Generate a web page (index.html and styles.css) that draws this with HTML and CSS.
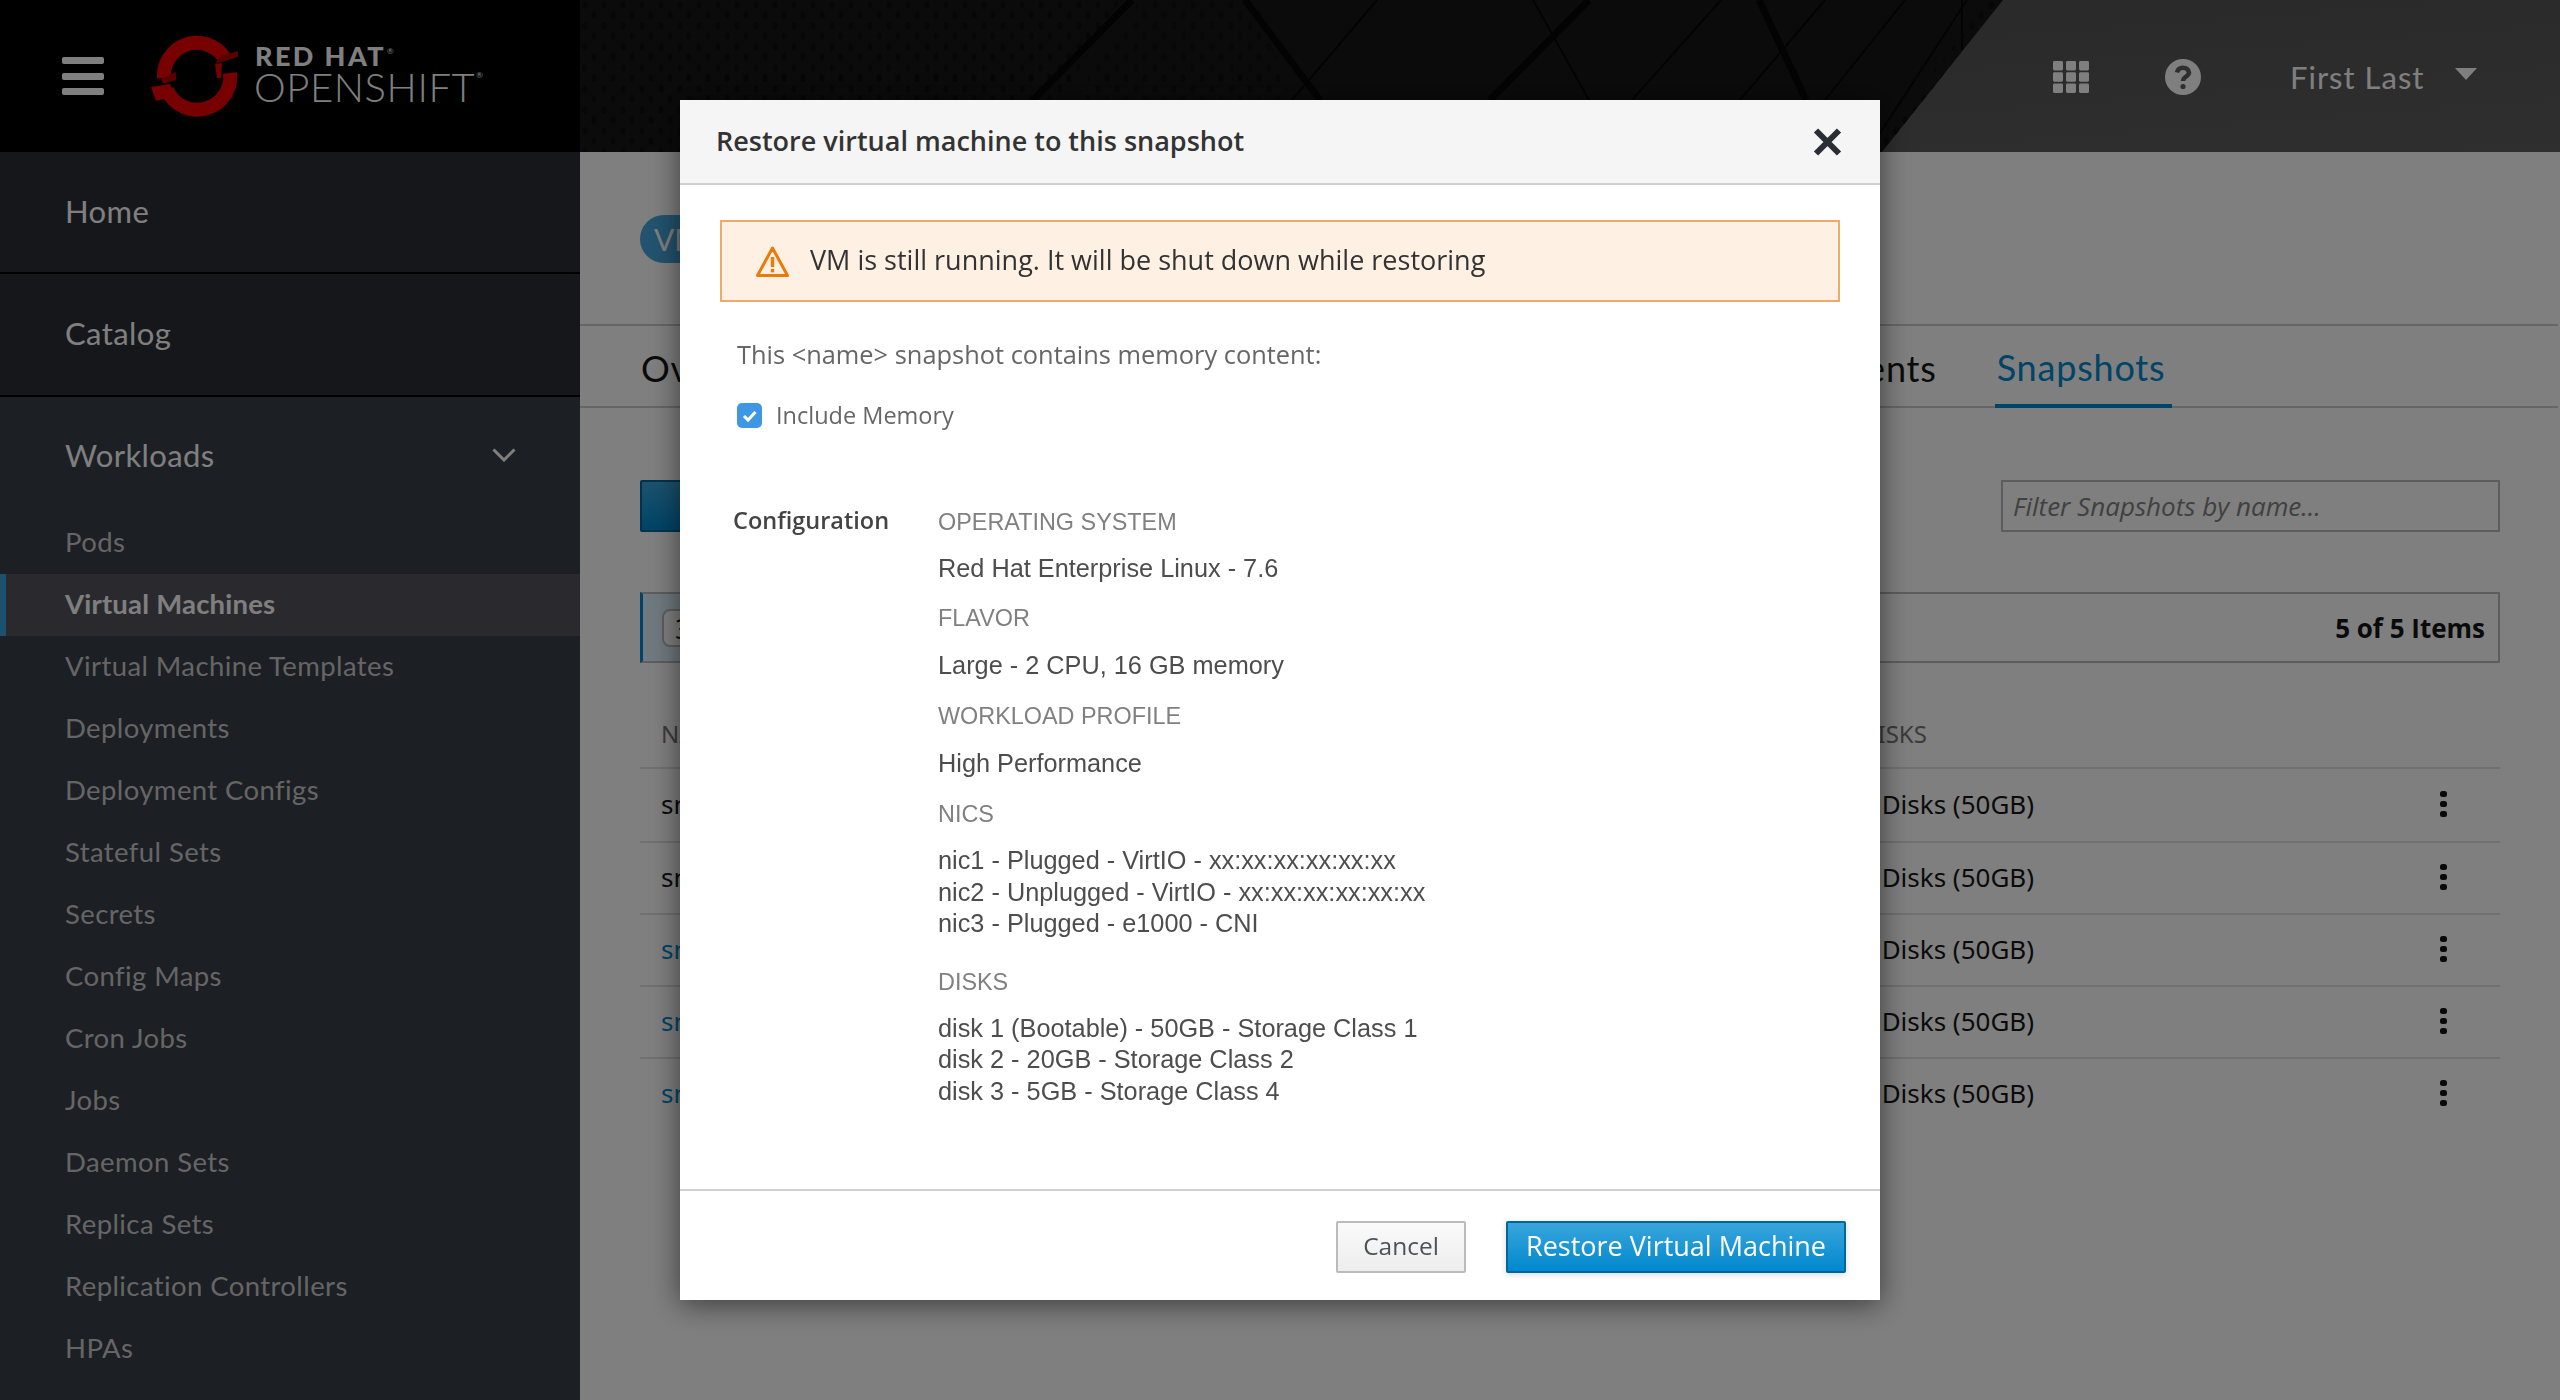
FILE: index.html
```html
<!DOCTYPE html>
<html lang="en">
<head>
<meta charset="utf-8">
<title>Restore virtual machine to this snapshot</title>
<link rel="stylesheet" href="styles.css">
</head>
<body>
<div class="page">
  <header class="masthead">
    <div class="brand">
      <div class="burger"><span></span><span></span><span></span></div>
      <svg class="logo-mark" viewBox="-48 -42 96 84" aria-hidden="true">
        <path class="ring" d="M-33 2A33 33 0 0 1 27 -19"/>
        <path class="ring" d="M33 -3A33 33 0 0 1 -30 14"/>
        <polygon class="stripe" points="24,-20 41,-25 41,-19 18,-12"/>
        <polygon class="stripe" points="-36,3 -21,-4 -21,4 -34,8"/>
        <polygon class="tab" points="-46,11 -27,8 -22,20 -41,25"/>
        <polygon class="tab" points="18,-12 25,-13 24,2 20,2"/>
      </svg>
      <div class="wordmark">
        <div class="wm-top">RED HAT<sup>®</sup></div>
        <div class="wm-bottom">OPENSHIFT<sup>®</sup></div>
      </div>
    </div>
    <div class="mast-main">
      <svg class="mast-art" viewBox="0 0 1980 152" preserveAspectRatio="none" aria-hidden="true">
        <defs>
          <pattern id="dots" width="19" height="21" patternUnits="userSpaceOnUse">
            <ellipse cx="5" cy="5" rx="2.6" ry="4" fill="#0e0e0e"/>
            <ellipse cx="14" cy="15" rx="2.6" ry="4" fill="#0e0e0e"/>
          </pattern>
          <linearGradient id="mastlight" x1="0" y1="0" x2="1" y2="1">
            <stop offset="0" stop-color="#4e4e4e"/>
            <stop offset="1" stop-color="#5e5e5e"/>
          </linearGradient>
        </defs>
        <rect width="1980" height="152" fill="url(#mastlight)"/>
        <polygon points="0,0 1423,0 1302,152 0,152" fill="#171717"/>
        <polygon points="0,0 540,0 450,152 0,152" fill="url(#dots)"/>
        <polygon points="560,0 680,0 710,100 480,152 460,152" fill="url(#dots)" opacity=".8"/>
        <polygon points="1410,0 1423,0 1302,152 1290,152" fill="url(#dots)"/>
        <g class="bands">
          <line x1="552" y1="0" x2="453" y2="100" class="thick"/>
          <line x1="665" y1="0" x2="740" y2="100" class="thick"/>
          <line x1="797" y1="0" x2="712" y2="100"/>
          <line x1="953" y1="0" x2="1009" y2="100"/>
          <line x1="1009" y1="0" x2="910" y2="100" class="thick"/>
          <line x1="1141" y1="0" x2="1052" y2="100"/>
          <line x1="1179" y1="0" x2="1226" y2="100" class="thick"/>
          <line x1="1245" y1="0" x2="1160" y2="100"/>
          <line x1="1325" y1="0" x2="1245" y2="100"/>
          <line x1="1387" y1="0" x2="1300" y2="133"/>
          <line x1="1382" y1="0" x2="1382" y2="50"/>
        </g>
      </svg>
      <div class="mast-tools">
        <svg class="tool-grid" viewBox="0 0 36 32" aria-hidden="true">
          <rect x="0" y="0" width="10" height="9.5" rx="1.4"/><rect x="13" y="0" width="10" height="9.5" rx="1.4"/><rect x="26" y="0" width="10" height="9.5" rx="1.4"/>
          <rect x="0" y="11.2" width="10" height="9.5" rx="1.4"/><rect x="13" y="11.2" width="10" height="9.5" rx="1.4"/><rect x="26" y="11.2" width="10" height="9.5" rx="1.4"/>
          <rect x="0" y="22.5" width="10" height="9.5" rx="1.4"/><rect x="13" y="22.5" width="10" height="9.5" rx="1.4"/><rect x="26" y="22.5" width="10" height="9.5" rx="1.4"/>
        </svg>
        <svg class="tool-help" viewBox="0 0 36 36" aria-hidden="true">
          <circle cx="18" cy="18" r="18" class="help-disc"/>
          <path class="help-mark" d="M12 13.5a6.2 6.2 0 0 1 12 0c0 4-6 4-6 8.5"/>
          <circle cx="18" cy="27.5" r="2.6" class="help-dot"/>
        </svg>
        <span class="user">First Last</span>
        <svg class="user-caret" viewBox="0 0 22 12" aria-hidden="true"><path d="M0 0H22L11 12Z"/></svg>
      </div>
    </div>
  </header>

  <div class="shell">
    <nav class="sidebar">
      <div class="nav-top">Home</div>
      <div class="nav-top">Catalog</div>
      <div class="nav-group">
        <div class="nav-head">
          <span>Workloads</span>
          <svg class="chev" viewBox="0 0 24 14" aria-hidden="true"><path d="M1.5 1.5 12 12 22.500 1.500"/></svg>
        </div>
        <a class="nav-sub">Pods</a>
        <a class="nav-sub is-active">Virtual Machines</a>
        <a class="nav-sub">Virtual Machine Templates</a>
        <a class="nav-sub">Deployments</a>
        <a class="nav-sub">Deployment Configs</a>
        <a class="nav-sub">Stateful Sets</a>
        <a class="nav-sub">Secrets</a>
        <a class="nav-sub">Config Maps</a>
        <a class="nav-sub">Cron Jobs</a>
        <a class="nav-sub">Jobs</a>
        <a class="nav-sub">Daemon Sets</a>
        <a class="nav-sub">Replica Sets</a>
        <a class="nav-sub">Replication Controllers</a>
        <a class="nav-sub">HPAs</a>
      </div>
    </nav>

    <main class="content">
      <div class="crumb"><span class="vm-pill">VM</span></div>
      <div class="tabs">
        <span class="tab-item">Overview</span>
        <span class="tab-item tab-events">Events</span>
        <span class="tab-item tab-current">Snapshots</span>
      </div>
      <div class="actions">
        <button class="take-btn">New</button>
        <div class="filter">Filter Snapshots by name...</div>
      </div>
      <div class="selection">
        <span class="sel-count">3</span>
        <strong class="sel-total">5 of 5 Items</strong>
      </div>
      <div class="table">
        <div class="t-row t-head"><span>NAME</span><span>DISKS</span><i></i></div>
        <div class="t-row t-a"><span>snapshot-1</span><span>3 Disks (50GB)</span><i class="kebab"><b></b><b></b><b></b></i></div>
        <div class="t-row t-b"><span>snapshot-2</span><span>3 Disks (50GB)</span><i class="kebab"><b></b><b></b><b></b></i></div>
        <div class="t-row t-b"><span class="t-link">snapshot-3</span><span>3 Disks (50GB)</span><i class="kebab"><b></b><b></b><b></b></i></div>
        <div class="t-row t-b"><span class="t-link">snapshot-4</span><span>3 Disks (50GB)</span><i class="kebab"><b></b><b></b><b></b></i></div>
        <div class="t-row t-b"><span class="t-link">snapshot-5</span><span>3 Disks (50GB)</span><i class="kebab"><b></b><b></b><b></b></i></div>
      </div>
    </main>
  </div>
</div>

<div class="backdrop">
  <section class="modal">
    <header class="modal-head">
      <h1 class="modal-title">Restore virtual machine to this snapshot</h1>
      <svg class="modal-close" viewBox="0 0 29 28" aria-hidden="true"><path d="M3 2.500 26 25.500M26 2.500 3 25.500"/></svg>
    </header>
    <div class="modal-body">
      <div class="alert">
        <svg class="alert-icon" viewBox="0 0 33 31" aria-hidden="true">
          <path class="alert-tri" d="M16.500 2 31.500 29.500H1.500Z"/>
          <rect class="alert-ex" x="14.800" y="11" width="3.400" height="10"/>
          <rect class="alert-ex" x="14.800" y="23" width="3.400" height="3.400"/>
        </svg>
        <span class="alert-text">VM is still running. It will be shut down while restoring</span>
      </div>
      <p class="memory-note">This &lt;name&gt; snapshot contains memory content:</p>
      <label class="memory-check">
        <svg class="check-box" viewBox="0 0 25 25" aria-hidden="true">
          <rect width="25" height="25" rx="5"/>
          <path d="M7 13 11 17 18.500 9"/>
        </svg>
        <span>Include Memory</span>
      </label>
      <div class="config">
        <div class="config-title">Configuration</div>
        <div class="config-list">
          <div class="c-label c-label-first">OPERATING SYSTEM</div>
          <div class="c-value c-value-first">Red Hat Enterprise Linux - 7.6</div>
          <div class="c-label">FLAVOR</div>
          <div class="c-value">Large - 2 CPU, 16 GB memory</div>
          <div class="c-label">WORKLOAD PROFILE</div>
          <div class="c-value">High Performance</div>
          <div class="c-label">NICS</div>
          <div class="c-value c-multi">
            <div>nic1 - Plugged - VirtIO - xx:xx:xx:xx:xx:xx</div>
            <div>nic2 - Unplugged - VirtIO - xx:xx:xx:xx:xx:xx</div>
            <div>nic3 - Plugged - e1000 - CNI</div>
          </div>
          <div class="c-label">DISKS</div>
          <div class="c-value c-multi">
            <div>disk 1 (Bootable) - 50GB - Storage Class 1</div>
            <div>disk 2 - 20GB - Storage Class 2</div>
            <div>disk 3 - 5GB - Storage Class 4</div>
          </div>
        </div>
      </div>
    </div>
    <footer class="modal-foot">
      <button class="btn btn-default">Cancel</button>
      <button class="btn btn-primary">Restore Virtual Machine</button>
    </footer>
  </section>
</div>
</body>
</html>
```
FILE: styles.css
```css
* { box-sizing: border-box; }
html, body { margin: 0; height: 100%; overflow: hidden; }
body { background: #fff; font-family: "Open Sans", "Liberation Sans", sans-serif; color: #151515; }

.page { height: 1400px; display: flex; flex-direction: column; }

/* masthead */
.masthead { height: 152px; display: flex; flex: none; background: #000; }
.brand { width: 580px; flex: none; display: flex; align-items: center; padding-left: 62px; }
.burger { width: 42px; display: flex; flex-direction: column; gap: 8.500px; margin-right: 45px; }
.burger span { display: block; height: 7px; background: #fff; border-radius: 2px; }
.logo-mark { width: 96px; height: 84px; flex: none; }
.ring { fill: none; stroke: #e00; stroke-width: 14; }
.stripe { fill: #b20000; }
.tab { fill: #e00; }
.wordmark { margin-left: 9px; color: #fff; font-family: "Lato", "Open Sans", sans-serif; margin-top: -2px; }
.wm-top { font-weight: 900; font-size: 27px; line-height: 24px; letter-spacing: 2.400px; margin-left: 1px; }
.wm-bottom { font-weight: 300; font-size: 40px; line-height: 38px; letter-spacing: .6px; }
.wordmark sup { font-size: 8px; font-weight: 400; vertical-align: top; line-height: 14px; letter-spacing: 0; margin-left: 1px; }

.mast-main { flex: 1; display: grid; min-width: 0; }
.mast-art, .mast-tools { grid-area: 1 / 1; }
.mast-art { width: 100%; height: 152px; display: block; }
.bands line { stroke: #070707; stroke-width: 2; }
.bands line.thick { stroke-width: 7; }
.mast-tools { display: flex; align-items: center; justify-content: flex-end; padding-right: 83px; color: #fff; }
.tool-grid { width: 36px; height: 32px; fill: #fff; margin-right: 76px; margin-top: 2px; }
.tool-help { width: 36px; height: 36px; margin-right: 89px; margin-top: 2px; }
.help-disc { fill: #fff; }
.help-mark { fill: none; stroke: #5f5f5f; stroke-width: 4.500; }
.help-dot { fill: #5f5f5f; }
.user { font-family: "Lato", sans-serif; font-size: 31px; letter-spacing: 1px; margin-right: 33px; margin-top: 2px; width: 132px; white-space: nowrap; }
.user-caret { width: 22px; height: 12px; fill: #fff; margin-top: -4px; }

/* shell */
.shell { flex: 1; display: flex; min-height: 0; }
.sidebar { width: 580px; flex: none; background: #383e46; font-family: "Lato", sans-serif; color: #fff; overflow: hidden; }
.nav-top { height: 122px; background: #2c2e36; border-bottom: 2px solid #000; display: flex; align-items: center; padding: 0 0 3px 65px; font-size: 31px; letter-spacing: .4px; color: #fff; }
.nav-top + .nav-top { height: 123px; }
.nav-head { height: 115px; display: flex; align-items: center; justify-content: space-between; padding: 0 64px 0 65px; font-size: 31px; letter-spacing: .4px; }
.chev { width: 24px; height: 14px; fill: none; stroke: #fff; stroke-width: 3; }
.nav-sub { display: flex; align-items: center; height: 62px; padding: 0 0 3px 65px; font-size: 27.500px; letter-spacing: .4px; color: #cbcbcb; }
.nav-sub.is-active { background: #54545c; color: #fff; font-weight: 700; letter-spacing: .2px; border-left: 6px solid #39a5dc; padding-left: 59px; }

/* content */
.content { flex: 1; min-width: 0; display: flex; flex-direction: column; background: #fff; }
.crumb { height: 174px; padding: 63px 0 0 60px; border-bottom: 2px solid #ccc; margin-right: 2px; flex: none; }
.vm-pill { display: flex; align-items: center; width: 100px; height: 48px; padding-left: 14px; border-radius: 24px; background: #46a6dc; color: #fff; font-size: 30px; font-family: "Lato", sans-serif; }
.tabs { height: 82px; flex: none; display: flex; align-items: center; border-bottom: 2px solid #ccc; margin-right: 2px; padding: 4px 0 0 61px; font-family: "Lato", sans-serif; font-size: 36px; letter-spacing: .8px; color: #151515; }
.tab-item { white-space: nowrap; }
.tab-events { margin-left: 912px; width: 224px; text-align: right; }
.tab-current { margin: -4px 0 -2px 58px; padding: 4px 7px 0 2px; color: #0088ce; align-self: stretch; display: flex; align-items: center; border-bottom: 4px solid #0088ce; }
.actions { flex: none; display: flex; justify-content: space-between; align-items: flex-start; padding: 72px 60px 0 60px; height: 184px; }
.take-btn { width: 280px; height: 52px; border: 2px solid #00659c; border-radius: 2px; background: linear-gradient(#39a5dc, #0088ce); color: #fff; font: 26px "Open Sans", sans-serif; padding: 0 0 0 36px; text-align: left; white-space: nowrap; }
.filter { width: 499px; height: 52px; border: 2px solid #bbb; background: #fff; padding-left: 10px; display: flex; align-items: center; font-style: italic; font-size: 26px; color: #828282; }
.selection { flex: none; height: 71px; margin: 0 60px; border: 2px solid #bbb; border-left: 3px solid #0088ce; background: linear-gradient(90deg, #def3ff, #fff 50%); display: flex; align-items: center; justify-content: space-between; padding: 0 13px 0 19px; }
.sel-count { width: 120px; height: 38px; border: 2px solid #bbb; border-radius: 8px; background: #fff; font-size: 28px; display: flex; align-items: center; padding-left: 11px; color: #151515; }
.sel-total { font-size: 26px; font-weight: 700; color: #151515; }
.table { margin: 0 60px; font-family: "Noto Sans", sans-serif; font-size: 26px; }
.t-row { display: grid; grid-template-columns: 1199px 1fr 60px; align-items: center; height: 72px; border-top: 2px solid #e0e0e0; padding-left: 21px; padding-bottom: 2px; }
.t-a { height: 74px; }
.t-head { height: 106px; border-top: 0; border-bottom: 2px solid #e0e0e0; margin-bottom: -2px; color: #777; font-size: 24px; padding-top: 38px; }
.t-link { color: #0088ce; }
.kebab { display: flex; flex-direction: column; gap: 3.500px; width: 7px; }
.kebab b { display: block; width: 7px; height: 6.500px; border-radius: 2.500px; background: #151515; }

/* modal */
.backdrop { position: fixed; inset: 0; background: rgba(0, 0, 0, .5); display: flex; align-items: center; justify-content: center; }
.modal { width: 1200px; height: 1200px; background: #fff; display: flex; flex-direction: column; box-shadow: 0 4px 28px rgba(0, 0, 0, .55); }
.modal-head { height: 85px; flex: none; background: #f5f5f5; border-bottom: 2px solid #d1d1d1; display: flex; align-items: center; justify-content: space-between; padding: 0 38px 3px 36px; }
.modal-title { margin: 0; font-size: 27px; font-weight: 600; color: #333; white-space: nowrap; }
.modal-close { width: 29px; height: 28px; fill: none; stroke: #292e34; stroke-width: 6; margin-top: 3px; }
.modal-body { flex: 1; padding: 35px 40px 0; }
.alert { height: 82px; border: 2px solid #ecab6d; background: #fef1e4; display: flex; align-items: center; padding-left: 34px; font-size: 27px; color: #333; }
.alert-icon { width: 33px; height: 31px; margin-right: 21px; }
.alert-tri { fill: none; stroke: #ec7a08; stroke-width: 3; stroke-linejoin: round; }
.alert-ex { fill: #ec7a08; }
.alert-text { margin-top: -3px; }
.memory-note { margin: 32px 0 0 17px; height: 40px; line-height: 40px; font-size: 25.400px; color: #666; white-space: nowrap; }
.memory-check { margin: 28px 0 0 17px; height: 26px; display: flex; align-items: center; font-size: 23.500px; color: #666; }
.check-box { width: 25px; height: 25px; margin-right: 14px; }
.check-box rect { fill: #3d97e2; }
.check-box path { fill: none; stroke: #fff; stroke-width: 3; }
.config { display: grid; grid-template-columns: 205px 1fr; margin: 76px 0 0 13px; }
.config-title { font-size: 23.500px; font-weight: 600; color: #444; line-height: 32px; }
.config-list { font-family: "Liberation Sans", sans-serif; font-size: 25.300px; color: #4d4d4d; filter: blur(.4px); }
.c-label { height: 32px; line-height: 32px; font-size: 23.400px; color: #808080; }
.c-label-first { margin-top: 2px; }
.c-value { height: 32px; line-height: 32px; margin: 15px 0 19px; }
.c-value-first { margin-top: 14px; margin-bottom: 18px; }
.c-multi { height: auto; line-height: 31.500px; margin-top: 15px; margin-bottom: 26px; }
.modal-foot { flex: none; height: 111px; border-top: 2px solid #d1d1d1; display: flex; justify-content: flex-end; align-items: flex-start; gap: 40px; padding: 30px 34px 0 0; }
.btn { height: 52px; font-family: "Open Sans", sans-serif; border-radius: 2px; padding: 0 0 3px; }
.btn-default { width: 130px; border: 2px solid #bbb; background: linear-gradient(#fafafa, #ededed); color: #4d5258; font-size: 24.500px; }
.btn-primary { width: 340px; border: 2px solid #00659c; background: linear-gradient(#39a5dc, #0088ce); color: #fff; font-size: 27px; box-shadow: 0 2px 6px rgba(0, 0, 0, .15); }
```
